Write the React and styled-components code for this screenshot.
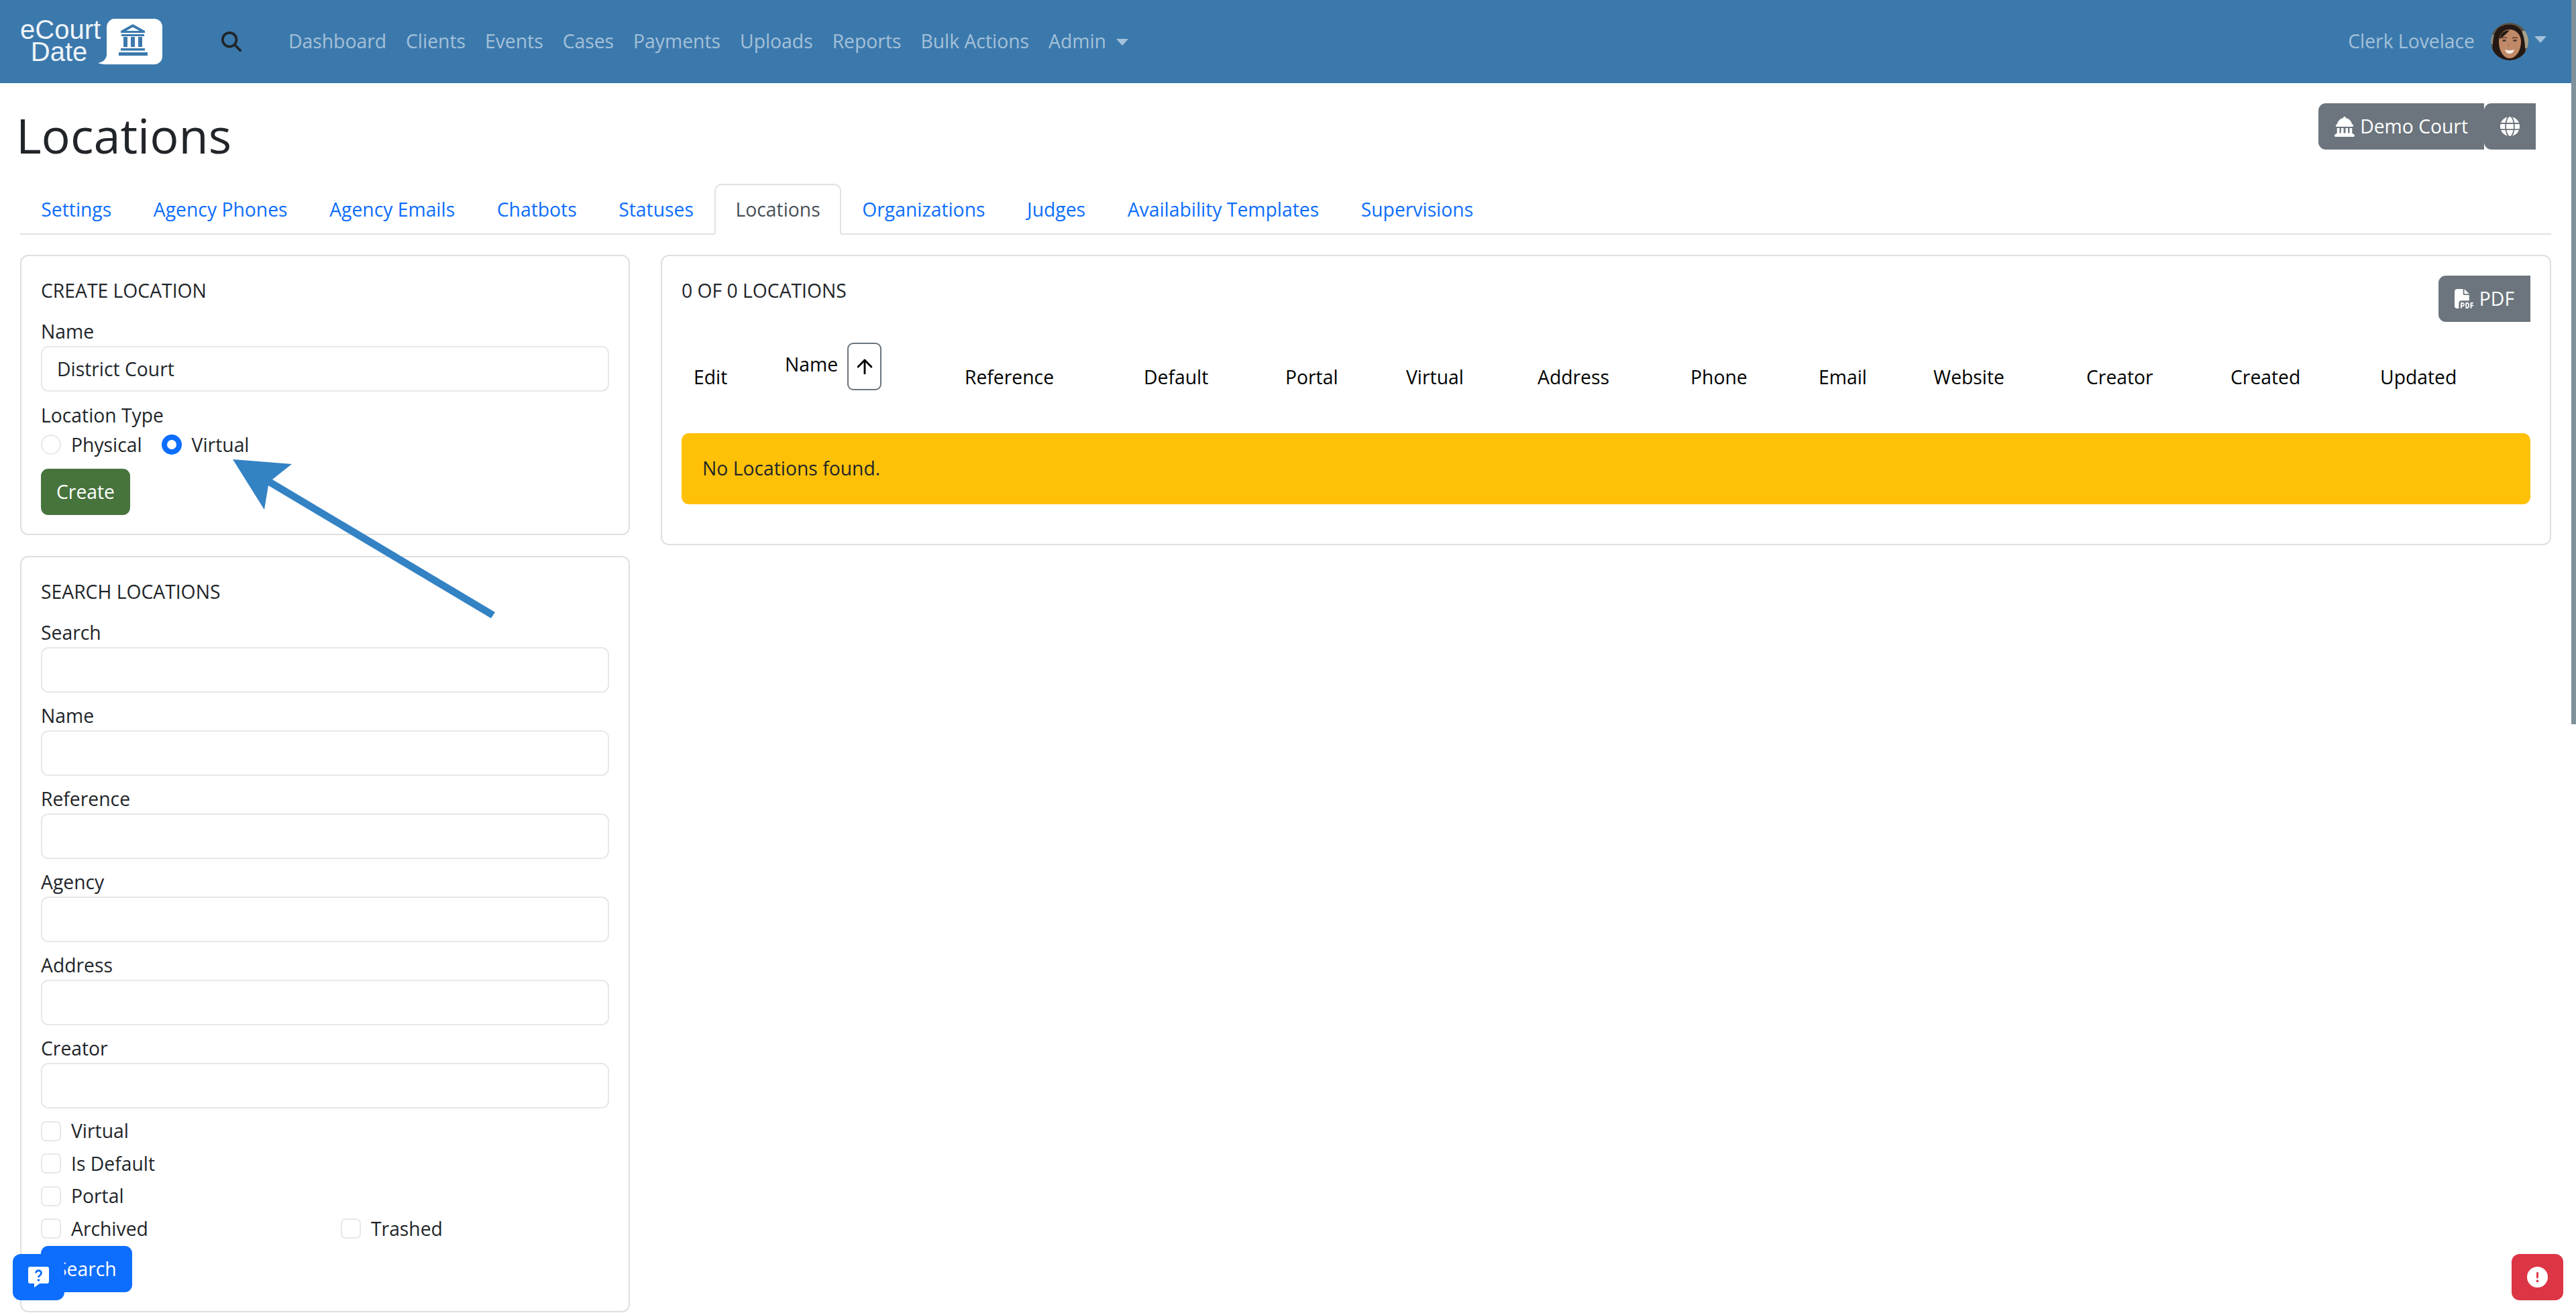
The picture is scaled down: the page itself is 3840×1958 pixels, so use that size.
import React from "react";
import styled, { createGlobalStyle } from "styled-components";
import { FaLandmarkDome, FaGlobe, FaFilePdf, FaCircleExclamation, FaMagnifyingGlass } from "react-icons/fa6";
import { ArrowUp } from "lucide-react";

const GlobalStyle = createGlobalStyle`
  html, body {
    margin: 0;
    height: 100%;
    overflow: hidden;
    background: #fff;
  }
  body {
    font-family: "Open Sans", "Noto Sans", sans-serif;
    font-size: 28.3px;
    line-height: 43.5px;
    color: #212529;
  }
  * { box-sizing: border-box; }
`;

const NAV_LINKS = ["Dashboard", "Clients", "Events", "Cases", "Payments", "Uploads", "Reports", "Bulk Actions"];
const TABS = ["Settings", "Agency Phones", "Agency Emails", "Chatbots", "Statuses", "Locations", "Organizations", "Judges", "Availability Templates", "Supervisions"];
const SEARCH_FIELDS = ["Search", "Name", "Reference", "Agency", "Address", "Creator"];
const COLUMNS = ["Edit", "Name", "Reference", "Default", "Portal", "Virtual", "Address", "Phone", "Email", "Website", "Creator", "Created", "Updated"];

function LogoBubble() {
  return (
    <svg width="96" height="68" viewBox="0 0 96 68">
      <path
        d="M29 0h55a12 12 0 0 1 12 12v44a12 12 0 0 1-12 12H26c-7 0-18 1-26-2 6-1 12-4 13-12V12A13 13 0 0 1 29 0z"
        fill="#fff"
      />
      <g fill="#3b79ad">
        <path d="M52 8l18 10v3H34v-3zM52 12.500l-10 5.500h20z" fillRule="evenodd" />
        <rect x="35" y="23" width="34" height="3" />
        <rect x="38" y="27" width="6" height="15" />
        <rect x="49" y="27" width="6" height="15" />
        <rect x="60" y="27" width="6" height="15" />
        <rect x="34" y="44" width="36" height="3.500" />
        <rect x="31" y="50" width="43" height="5" />
      </g>
    </svg>
  );
}

function Avatar() {
  return (
    <svg width="56" height="56" viewBox="0 0 56 56">
      <defs>
        <clipPath id="avatar-clip">
          <circle cx="28" cy="28" r="28" />
        </clipPath>
      </defs>
      <g clipPath="url(#avatar-clip)">
        <rect width="56" height="56" fill="#5d5346" />
        <rect x="47" y="12" width="9" height="26" fill="#a8a08a" />
        <rect x="0" y="18" width="5" height="14" fill="#8d8f88" />
        <path d="M3 56C3 40 0 14 14 6c10-5 24-5 31 5 7 11 6 30 7 45z" fill="#241813" />
        <path d="M12 28c0-11 7-18 16-18s17 7 17 18c0 14-8 25-17 25s-16-11-16-25z" fill="#c08a68" />
        <path d="M13 24c5-3 11-8 15-13-8 0-14 5-15 13z" fill="#241813" />
        <path d="M16 23c2-1.500 6-1.500 8 0M32 23c2-1.500 6-1.500 8 0" fill="none" stroke="#4a3026" strokeWidth="1.200" />
        <ellipse cx="20" cy="26.500" rx="3" ry="1.400" fill="#4d3a30" />
        <ellipse cx="36" cy="26.500" rx="3" ry="1.400" fill="#4d3a30" />
        <path d="M26.500 31c-1 2-1.500 4 1.500 4.500" fill="none" stroke="#a26f50" strokeWidth="1" />
        <path d="M21 40c4 1.500 10 1.500 14 0-1 4-4 6-7 6s-6-2-7-6z" fill="#f6ece4" />
      </g>
    </svg>
  );
}

function HelpBubble() {
  return (
    <svg width="31" height="31" viewBox="0 0 31 31">
      <path d="M3 0h25a3 3 0 0 1 3 3v19a3 3 0 0 1-3 3H17l-8 6v-6H3a3 3 0 0 1-3-3V3a3 3 0 0 1 3-3z" fill="#fff" />
      <path d="M11.500 9.500c0-5 8-5 8 0 0 3.500-4 3-4 6.500" fill="none" stroke="#0d6efd" strokeWidth="2.800" />
      <circle cx="15.500" cy="20" r="1.800" fill="#0d6efd" />
    </svg>
  );
}

function AnnotationArrow() {
  return (
    <ArrowSvg width="420" height="260" viewBox="340 680 420 260">
      <path d="M347 685 L435 692 L406 715 L738 913 L732 922 L400 724 L394 760 Z" fill="#3382c4" />
    </ArrowSvg>
  );
}

function Field({ label, value }) {
  return (
    <FieldBlock>
      <FieldLabel>{label}</FieldLabel>
      <TextInput defaultValue={value} />
    </FieldBlock>
  );
}

function CheckRow({ children }) {
  return (
    <CheckLabel>
      <CheckBox type="checkbox" />
      {children}
    </CheckLabel>
  );
}

export default function App() {
  return (
    <Page>
      <GlobalStyle />
      <NavBar>
        <Logo>
          <LogoText>
            eCourt
            <br />
            Date
          </LogoText>
          <LogoBubble />
        </Logo>
        <SearchIcon>
          <FaMagnifyingGlass size={30} />
        </SearchIcon>
        <NavLinks>
          {NAV_LINKS.map((link) => (
            <NavLink key={link}>{link}</NavLink>
          ))}
          <NavLink>
            Admin <Caret />
          </NavLink>
        </NavLinks>
        <UserMenu>
          <NavLink>Clerk Lovelace</NavLink>
          <Avatar />
          <Caret />
        </UserMenu>
      </NavBar>

      <Main>
        <PageHeader>
          <Title>Locations</Title>
          <ButtonGroup>
            <GreyButton>
              <FaLandmarkDome size={30} /> Demo Court
            </GreyButton>
            <GreyButton>
              <FaGlobe size={29} />
            </GreyButton>
          </ButtonGroup>
        </PageHeader>

        <Tabs>
          {TABS.map((tab) => (
            <Tab key={tab} $active={tab === "Locations"}>
              {tab}
            </Tab>
          ))}
        </Tabs>

        <Columns>
          <Sidebar>
            <Card>
              <CardTitle>Create Location</CardTitle>
              <Field label="Name" value="District Court" />
              <FieldLabel $top={14}>Location Type</FieldLabel>
              <RadioRow>
                <CheckLabel>
                  <RadioInput type="radio" name="type" />
                  Physical
                </CheckLabel>
                <CheckLabel>
                  <RadioInput type="radio" name="type" defaultChecked />
                  Virtual
                </CheckLabel>
              </RadioRow>
              <SolidButton $bg="#47733d">Create</SolidButton>
            </Card>

            <Card>
              <CardTitle>Search Locations</CardTitle>
              <FieldStack>
                {SEARCH_FIELDS.map((name) => (
                  <Field key={name} label={name} />
                ))}
              </FieldStack>
              <CheckStack>
                <CheckRow>Virtual</CheckRow>
                <CheckRow>Is Default</CheckRow>
                <CheckRow>Portal</CheckRow>
                <TwoUp>
                  <CheckRow>Archived</CheckRow>
                  <CheckRow>Trashed</CheckRow>
                </TwoUp>
              </CheckStack>
              <SolidButton $bg="#0d6efd" $top={4}>
                Search
              </SolidButton>
            </Card>
          </Sidebar>

          <Results>
            <ResultsHead>
              <CardTitle>0 of 0 Locations</CardTitle>
              <GreyButton>
                <FaFilePdf size={29} /> PDF
              </GreyButton>
            </ResultsHead>
            <HeaderRow>
              {COLUMNS.map((col) =>
                col === "Name" ? (
                  <NameCell key={col}>
                    <NameText>{col}</NameText>
                    <SortButton>
                      <ArrowUp size={34} strokeWidth={2} />
                    </SortButton>
                  </NameCell>
                ) : (
                  <HeaderCell key={col}>{col}</HeaderCell>
                )
              )}
            </HeaderRow>
            <Alert>No Locations found.</Alert>
          </Results>
        </Columns>
      </Main>

      <AnnotationArrow />
      <HelpFloat>
        <HelpBubble />
      </HelpFloat>
      <ReportFloat>
        <FaCircleExclamation size={31} />
      </ReportFloat>
      <ScrollThumb />
    </Page>
  );
}

const Page = styled.div`
  position: relative;
  height: 100vh;
  overflow: hidden;
`;

const NavBar = styled.nav`
  height: 124px;
  background: #3b79ad;
  display: flex;
  align-items: center;
  padding: 0 44px 0 30px;
`;

const Logo = styled.div`
  display: flex;
  align-items: flex-start;
  width: 242px;
  height: 68px;
`;

const LogoText = styled.div`
  width: 116px;
  text-align: center;
  font-family: "Liberation Sans", sans-serif;
  font-size: 40px;
  line-height: 33px;
  color: #fff;
  font-weight: 400;
  opacity: 0.92;
`;

const SearchIcon = styled.div`
  display: flex;
  color: #212529;
  margin-left: 58px;
`;

const NavLinks = styled.div`
  display: flex;
  gap: 29px;
  margin-left: 70px;
`;

const NavLink = styled.a`
  color: rgba(255, 255, 255, 0.55);
  white-space: nowrap;
`;

const Caret = styled.span`
  display: inline-block;
  width: 0;
  height: 0;
  margin-left: 8px;
  vertical-align: 4px;
  border-top: 10px solid rgba(255, 255, 255, 0.55);
  border-left: 9px solid transparent;
  border-right: 9px solid transparent;
`;

const UserMenu = styled.div`
  margin-left: auto;
  display: flex;
  align-items: center;
  gap: 24px;

  ${Caret} {
    margin-left: -15px;
    margin-bottom: 6px;
  }
`;

const Main = styled.main`
  padding: 0 37px 0 30px;
`;

const PageHeader = styled.div`
  height: 150px;
  display: flex;
  justify-content: space-between;
  align-items: flex-start;
  padding-right: 23px;
`;

const Title = styled.h1`
  margin: 0 0 0 -6px;
  padding-top: 34px;
  font-size: 72px;
  line-height: 1.2;
  font-weight: 500;
`;

const ButtonGroup = styled.div`
  display: flex;
  margin-top: 30px;
`;

const GreyButton = styled.button`
  height: 69px;
  padding: 0 24px;
  display: inline-flex;
  align-items: center;
  gap: 8px;
  border: 0;
  border-radius: 11px 0 0 11px;
  background: #6c757d;
  color: #fff;
  font: inherit;
`;

const Tabs = styled.div`
  height: 76px;
  display: flex;
  border-bottom: 2px solid #dee2e6;
`;

const Tab = styled.a`
  height: 76px;
  padding: 15px 29.3px 0;
  color: ${(p) => (p.$active ? "#495057" : "#0d6efd")};
  background: ${(p) => (p.$active ? "#fff" : "transparent")};
  border: 2px solid ${(p) => (p.$active ? "#dee2e6" : "transparent")};
  border-bottom-color: ${(p) => (p.$active ? "#fff" : "transparent")};
  border-radius: 11px 11px 0 0;
  white-space: nowrap;
`;

const Columns = styled.div`
  display: grid;
  grid-template-columns: 909px 1fr;
  gap: 46px;
  margin-top: 30px;
  align-items: start;
`;

const Sidebar = styled.div`
  display: flex;
  flex-direction: column;
  gap: 31px;
`;

const Card = styled.section`
  border: 2px solid #dfdfdf;
  border-radius: 12px;
  padding: 30px 29px 28px;
`;

const CardTitle = styled.div`
  text-transform: uppercase;
  margin-bottom: 17px;
`;

const FieldBlock = styled.div``;

const FieldLabel = styled.div`
  margin-top: ${(p) => p.$top || 0}px;
`;

const TextInput = styled.input`
  display: block;
  width: 100%;
  height: 68px;
  padding: 0 22px;
  border: 2px solid #e6e8ea;
  border-radius: 11px;
  font: inherit;
  color: #212529;
  outline: none;
`;

const RadioRow = styled.div`
  display: flex;
  gap: 29px;
`;

const CheckLabel = styled.label`
  display: flex;
  align-items: center;
  gap: 15px;
  height: 43.5px;
`;

const RadioInput = styled.input`
  appearance: none;
  width: 30px;
  height: 30px;
  margin: 0;
  border-radius: 50%;
  border: 2px solid #e6e8ea;
  background: #fff;

  &:checked {
    border: 8px solid #0d6efd;
  }
`;

const CheckBox = styled.input`
  appearance: none;
  width: 30px;
  height: 30px;
  margin: 0;
  border-radius: 7px;
  border: 2px solid #e6e8ea;
  background: #fff;
`;

const SolidButton = styled.button`
  display: block;
  height: 69px;
  padding: 0 23px;
  margin-top: ${(p) => p.$top ?? 14}px;
  border: 0;
  border-radius: 11px;
  background: ${(p) => p.$bg};
  color: #fff;
  font: inherit;
`;

const FieldStack = styled.div`
  display: flex;
  flex-direction: column;
  gap: 12.5px;
`;

const CheckStack = styled.div`
  display: flex;
  flex-direction: column;
  gap: 5px;
  margin-top: 12px;
`;

const TwoUp = styled.div`
  display: grid;
  grid-template-columns: 447px 1fr;
`;

const Results = styled(Card)`
  padding: 29px 29px 59px;
`;

const ResultsHead = styled.div`
  display: flex;
  justify-content: space-between;
  align-items: flex-start;

  ${CardTitle} {
    margin: 1px 0 0;
  }
`;

const HeaderRow = styled.div`
  display: grid;
  grid-template-columns: 136px 268px 267px 211px 180px 196px 228px 191px 171px 228px 215px 223px 224px;
  align-items: end;
  padding-left: 18px;
  margin-top: 31px;
  color: #000;
`;

const HeaderCell = styled.div`
  white-space: nowrap;
`;

const NameCell = styled.div`
  display: flex;
  align-items: center;
  gap: 14px;
  margin-bottom: 2px;
`;

const NameText = styled.span`
  margin-bottom: 6px;
`;

const SortButton = styled.span`
  width: 51px;
  height: 71px;
  display: flex;
  align-items: center;
  justify-content: center;
  border: 2px solid #6c757d;
  border-radius: 9px;
  color: #000;
`;

const Alert = styled.div`
  margin-top: 62px;
  height: 106px;
  padding: 31px 31px;
  border-radius: 11px;
  background: #ffc107;
`;

const ArrowSvg = styled.svg`
  position: absolute;
  left: 340px;
  top: 680px;
`;

const Float = styled.div`
  position: absolute;
  top: 1870px;
  height: 69px;
  display: flex;
  align-items: center;
  justify-content: center;
  border-radius: 12px;
  color: #fff;
`;

const HelpFloat = styled(Float)`
  left: 19px;
  width: 77px;
  background: #0d6efd;
`;

const ReportFloat = styled(Float)`
  right: 19px;
  width: 77px;
  background: #dc3545;
`;

const ScrollThumb = styled.div`
  position: absolute;
  top: 0;
  right: 0;
  width: 7px;
  height: 1080px;
  background: #7f919b;
`;
